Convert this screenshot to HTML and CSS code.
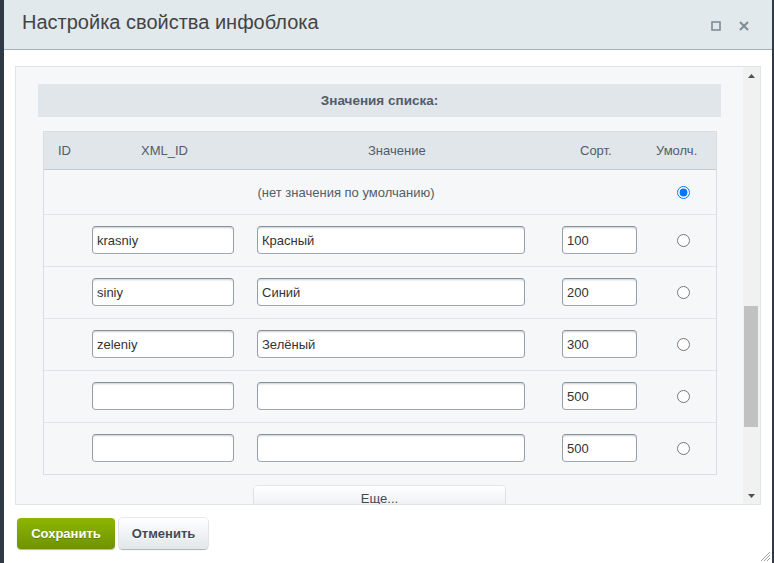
FILE: index.html
```html
<!DOCTYPE html>
<html lang="ru">
<head>
<meta charset="utf-8">
<title>Настройка свойства инфоблока</title>
<link rel="stylesheet" href="styles.css">
</head>
<body>
<div class="dialog">
  <div class="titlebar">
    <span class="title">Настройка свойства инфоблока</span>
    <div class="title-icons">
      <svg class="ico" width="10" height="10" viewBox="0 0 10 10"><rect x="1" y="1" width="8" height="8" fill="none" stroke="#7f8c95" stroke-width="1.6"/></svg>
      <svg class="ico" width="10" height="10" viewBox="0 0 10 10"><path d="M1 1 L9 9 M9 1 L1 9" stroke="#7f8c95" stroke-width="2"/></svg>
    </div>
  </div>
  <div class="content">
    <div class="scrollbox">
      <div class="scroll-inner">
        <div class="band">Значения списка:</div>
        <div class="tbl">
          <div class="row head">
            <div class="h-id">ID</div>
            <div class="h-xml">XML_ID</div>
            <div class="h-val">Значение</div>
            <div class="h-sort">Сорт.</div>
            <div class="h-def">Умолч.</div>
          </div>
          <div class="row def">
            <div class="def-text">(нет значения по умолчанию)</div>
            <div class="c-radio"><input type="radio" name="d" checked></div>
          </div>
          <div class="row data">
            <div></div>
            <div class="c-xml"><input class="inp w-xml" type="text" value="krasniy"></div>
            <div class="c-val"><input class="inp w-val" type="text" value="Красный"></div>
            <div class="c-sort"><input class="inp w-sort" type="text" value="100"></div>
            <div class="c-radio"><input type="radio" name="d"></div>
          </div>
          <div class="row data">
            <div></div>
            <div class="c-xml"><input class="inp w-xml" type="text" value="siniy"></div>
            <div class="c-val"><input class="inp w-val" type="text" value="Синий"></div>
            <div class="c-sort"><input class="inp w-sort" type="text" value="200"></div>
            <div class="c-radio"><input type="radio" name="d"></div>
          </div>
          <div class="row data">
            <div></div>
            <div class="c-xml"><input class="inp w-xml" type="text" value="zeleniy"></div>
            <div class="c-val"><input class="inp w-val" type="text" value="Зелёный"></div>
            <div class="c-sort"><input class="inp w-sort" type="text" value="300"></div>
            <div class="c-radio"><input type="radio" name="d"></div>
          </div>
          <div class="row data">
            <div></div>
            <div class="c-xml"><input class="inp w-xml" type="text" value=""></div>
            <div class="c-val"><input class="inp w-val" type="text" value=""></div>
            <div class="c-sort"><input class="inp w-sort" type="text" value="500"></div>
            <div class="c-radio"><input type="radio" name="d"></div>
          </div>
          <div class="row data">
            <div></div>
            <div class="c-xml"><input class="inp w-xml" type="text" value=""></div>
            <div class="c-val"><input class="inp w-val" type="text" value=""></div>
            <div class="c-sort"><input class="inp w-sort" type="text" value="500"></div>
            <div class="c-radio"><input type="radio" name="d"></div>
          </div>
        </div>
        <div class="more-wrap"><button class="more" type="button">Еще...</button></div>
      </div>
      <div class="scrollbar">
        <div class="sb-arrow"><svg width="7" height="4" viewBox="0 0 7 4"><path d="M0 4 L3.5 0 L7 4Z" fill="#505050"/></svg></div>
        <div class="sb-track"><div class="sb-thumb"></div></div>
        <div class="sb-arrow"><svg width="7" height="4" viewBox="0 0 7 4"><path d="M0 0 L7 0 L3.5 4Z" fill="#505050"/></svg></div>
      </div>
    </div>
    <div class="footer">
      <button class="btn save" type="button">Сохранить</button>
      <button class="btn cancel" type="button">Отменить</button>
    </div>
  </div>
  <svg class="grip" width="12" height="12" viewBox="0 0 12 12">
    <path d="M11 2 L2 11 M11 5 L5 11 M11 8 L8 11" stroke="#9aa3a8" stroke-width="1"/>
  </svg>
</div>
</body>
</html>
```

FILE: styles.css
```css
* { box-sizing: border-box; }
html, body { margin: 0; padding: 0; }
body {
  background: #2f3a45;
  width: 774px;
  height: 563px;
  overflow: hidden;
  font-family: "Liberation Sans", Arial, sans-serif;
  font-size: 13px;
  color: #535c69;
}
.dialog {
  position: relative;
  margin-left: 4px;
  width: 768px;
  height: 563px;
  background: #fff;
  display: flex;
  flex-direction: column;
}
.titlebar {
  height: 50px;
  flex: none;
  background: #e2e9ec;
  border-bottom: 1px solid #a6b0b5;
  display: flex;
  align-items: flex-start;
  justify-content: space-between;
  padding: 9px 23px 0 18px;
}
.title {
  font-size: 20px;
  line-height: 26px;
  color: #444;
}
.title-icons {
  display: flex;
  gap: 18px;
  padding-top: 12px;
}
.ico { display: block; }
.content {
  flex: 1;
  display: flex;
  flex-direction: column;
}
.scrollbox {
  margin: 16px 0 0 11px;
  width: 746px;
  height: 439px;
  border: 1px solid #dfe4e7;
  background: #f5f7f8;
  display: flex;
  overflow: hidden;
}
.scroll-inner {
  flex: 1;
  overflow: hidden;
  padding: 17px 22px 0 22px;
}
.band {
  height: 33px;
  line-height: 33px;
  background: #e0e6e9;
  text-align: center;
  font-weight: bold;
  font-size: 13.5px;
  color: #535c69;
}
.tbl {
  margin: 14px 4px 0 5px;
  border: 1px solid #d8dee1;
}
.row {
  display: grid;
  grid-template-columns: 42px 160px 294px 112px 64px;
  align-items: center;
  border-bottom: 1px solid #dfe4e7;
}
.row:last-child { border-bottom: none; }
.head {
  height: 38px;
  background: #e0e6e9;
  border-bottom: 1px solid #c5ccd0;
  color: #535c69;
}
.h-id { padding-left: 14px; }
.h-xml { padding-left: 55px; }
.h-val { padding-left: 122px; }
.h-sort { padding-left: 40px; }
.h-def { padding-left: 4px; }
.def { height: 45px; }
.def-text {
  grid-column: 1 / span 4;
  text-align: center;
  padding-right: 4px;
  color: #535c69;
}
.data { height: 52px; }
.data:last-child { height: 51px; }
.c-radio {
  display: flex;
  justify-content: center;
  padding-right: 2px;
}
.c-radio input { margin: 0; width: 13px; height: 13px; }
.c-xml { padding-left: 6px; }
.c-val { padding-left: 11px; }
.c-sort { padding-left: 22px; }
.inp {
  display: block;
  height: 28px;
  margin: 0 0 1px 0;
  padding: 0 4px;
  font-family: "Liberation Sans", Arial, sans-serif;
  font-size: 13px;
  color: #333;
  background: #fff;
  border: 1px solid;
  border-color: #87919c #959ea9 #9ea7b1 #959ea9;
  border-radius: 4px;
  box-shadow: 0 1px 0 0 rgba(255,255,255,.3), inset 0 2px 2px -1px rgba(180,188,191,.7);
  outline: none;
}
.w-xml { width: 142px; }
.w-val { width: 268px; }
.w-sort { width: 75px; }
.more-wrap {
  display: flex;
  justify-content: center;
  margin-top: 11px;
}
.more {
  width: 251px;
  height: 30px;
  border: none;
  border-radius: 4px;
  background: linear-gradient(#fff, #e4e9ec);
  box-shadow: 0 1px 1px rgba(0,0,0,.25), inset 0 1px #fff, 0 0 0 1px rgba(188,193,196,.3);
  font-family: "Liberation Sans", Arial, sans-serif;
  font-size: 13px;
  color: #3f4b54;
  padding: 0 0 5px;
}
.scrollbar {
  width: 17px;
  flex: none;
  background: #f1f1f1;
  display: flex;
  flex-direction: column;
}
.sb-arrow {
  height: 17px;
  flex: none;
  display: flex;
  align-items: center;
  justify-content: center;
}
.sb-track {
  flex: 1;
  padding: 222px 2px 0 1px;
}
.sb-thumb {
  height: 121px;
  background: #c1c1c1;
}
.footer {
  display: flex;
  gap: 4px;
  padding: 13px 0 0 13px;
}
.btn {
  height: 31px;
  border: none;
  border-radius: 4px;
  font-family: "Liberation Sans", Arial, sans-serif;
  font-size: 13px;
  font-weight: bold;
  padding: 0;
}
.save {
  width: 98px;
  color: #fff;
  background: linear-gradient(#8db600, #6f9300);
  box-shadow: 0 1px 1px rgba(0,0,0,.3);
  text-shadow: 0 1px rgba(0,0,0,.25);
}
.cancel {
  width: 89px;
  color: #3f4b54;
  background: linear-gradient(#fff, #e1e7ea);
  box-shadow: 0 1px 1px rgba(0,0,0,.25), 0 0 0 1px rgba(188,193,196,.35);
  text-shadow: 0 1px #fff;
}
.grip {
  position: absolute;
  right: 1px;
  bottom: 1px;
}
```
